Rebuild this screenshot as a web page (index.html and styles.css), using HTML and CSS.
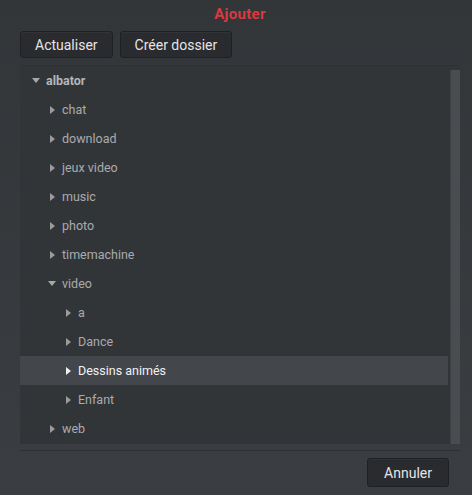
FILE: index.html
```html
<!DOCTYPE html>
<html lang="fr">
<head>
<meta charset="utf-8">
<link rel="stylesheet" href="styles.css">
</head>
<body>
<div class="dialog">
  <div class="title">Ajouter</div>
  <div class="toolbar">
    <button class="btn">Actualiser</button>
    <button class="btn">Créer dossier</button>
  </div>
  <div class="panel">
    <ul class="tree">
      <li class="row lvl0 bold"><span class="arrow down"></span>albator</li>
      <li class="row lvl1"><span class="arrow"></span>chat</li>
      <li class="row lvl1"><span class="arrow"></span>download</li>
      <li class="row lvl1"><span class="arrow"></span>jeux video</li>
      <li class="row lvl1"><span class="arrow"></span>music</li>
      <li class="row lvl1"><span class="arrow"></span>photo</li>
      <li class="row lvl1"><span class="arrow"></span>timemachine</li>
      <li class="row lvl1"><span class="arrow down"></span>video</li>
      <li class="row lvl2"><span class="arrow"></span>a</li>
      <li class="row lvl2"><span class="arrow"></span>Dance</li>
      <li class="row lvl2 selected"><span class="arrow"></span>Dessins animés</li>
      <li class="row lvl2"><span class="arrow"></span>Enfant</li>
      <li class="row lvl1"><span class="arrow"></span>web</li>
    </ul>
    <div class="scrollbar"></div>
  </div>
  <div class="footer">
    <button class="btn">Annuler</button>
  </div>
</div>
</body>
</html>
```
FILE: styles.css
```css
html, body {
  margin: 0;
  padding: 0;
}
body {
  width: 472px;
  height: 495px;
  background: linear-gradient(#333639, #3a3d41);
  font-family: Roboto, "Liberation Sans", sans-serif;
  font-size: 12px;
  color: #a9abae;
  overflow: hidden;
}
.dialog {
  display: flex;
  flex-direction: column;
  padding: 0 12px 0 20px;
}
.title {
  height: 29px;
  line-height: 29px;
  text-align: center;
  font-weight: bold;
  font-size: 15px;
  letter-spacing: 0.3px;
  color: #d93a40;
}
.toolbar {
  display: flex;
  gap: 7px;
  margin-top: 2px;
}
.btn {
  font-family: Roboto, "Liberation Sans", sans-serif;
  font-size: 14px;
  color: #e4e5e6;
  background: #2a2b2e;
  border: 1px solid #1f2022;
  border-radius: 3px;
  height: 27px;
  padding: 0 14px;
  box-shadow: inset 0 1px 0 rgba(255,255,255,0.04);
}
.panel {
  margin-top: 8px;
  position: relative;
  background: #323538;
  height: 378px;
  box-shadow: 0 -1px 0 #2f3235;
}
.tree {
  list-style: none;
  margin: 0;
  padding: 0;
  width: 428px;
}
.row {
  height: 29px;
  display: flex;
  align-items: center;
  font-size: 12.5px;
  color: #a9abae;
}
.row.bold {
  font-weight: bold;
  color: #b4b6b9;
}
.lvl0 { padding-left: 14px; }
.lvl1 { padding-left: 30px; }
.lvl2 { padding-left: 46px; }
.row.selected {
  background: #43464b;
  color: #f2f2f3;
}
.arrow {
  width: 0;
  height: 0;
  border-top: 4px solid transparent;
  border-bottom: 4px solid transparent;
  border-left: 5px solid #9a9c9f;
  margin-right: 7px;
}
.selected .arrow {
  border-left-color: #f0f0f0;
}
.arrow.down {
  border-left: 4px solid transparent;
  border-right: 4px solid transparent;
  border-top: 5px solid #a6a8ab;
  border-bottom: 0;
  margin-left: -2px;
  margin-right: 6px;
}
.scrollbar {
  position: absolute;
  right: 0;
  top: 4px;
  bottom: 0;
  width: 9px;
  background: #4a4c50;
  border-left: 1px solid #3e4144;
}
.footer {
  border-top: 1px solid #2e3033;
  margin-top: 6px;
  display: flex;
  justify-content: flex-end;
  padding-top: 7px;
  padding-right: 11px;
}
.footer .btn {
  height: 29px;
  padding: 0 16px;
}
```
